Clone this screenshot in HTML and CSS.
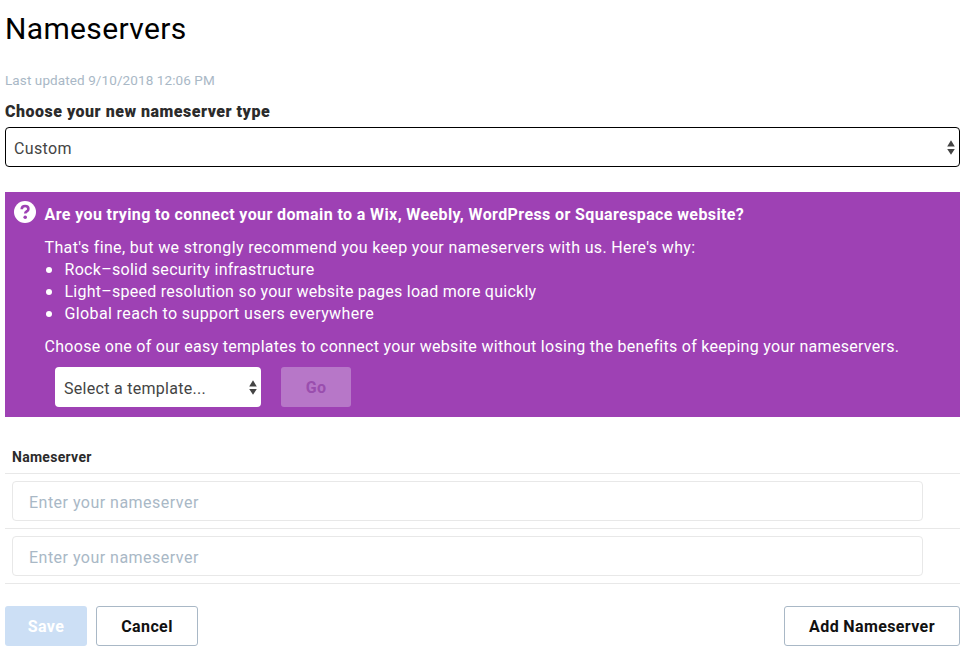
FILE: index.html
```
<!DOCTYPE html>
<html lang="en">
<head>
<meta charset="utf-8">
<title>Nameservers</title>
<link rel="stylesheet" href="styles.css">
</head>
<body>
<main class="page">
  <h1 class="title">Nameservers</h1>
  <p class="updated">Last updated 9/10/2018 12:06 PM</p>
  <div class="label">Choose your new nameserver type</div>
  <div class="select select-wide"><span>Custom</span><svg class="arrows" viewBox="0 0 8 15"><path d="M4 0.3 7.8 6.5H.2zM.2 9h7.6L4 14.7z"/></svg></div>

  <section class="notice">
    <svg class="help" viewBox="0 0 22 22"><circle cx="11" cy="11" r="11" fill="#fff"/><path d="M7.7 8.2C7.8 6 9.2 5 11.1 5s3.3 1.1 3.3 2.9c0 2.6-3.2 2.4-3.2 4.7" fill="none" stroke="#9e41b4" stroke-width="2.6"/><circle cx="11.2" cy="16.2" r="1.8" fill="#9e41b4"/></svg>
    <div class="notice-body">
      <h2 class="question">Are you trying to connect your domain to a Wix, Weebly, WordPress or Squarespace website?</h2>
      <p class="text intro">That's fine, but we strongly recommend you keep your nameservers with us. Here's why:</p>
      <ul class="reasons">
        <li>Rock–solid security infrastructure</li>
        <li class="speed">Light–speed resolution so your website pages load more quickly</li>
        <li class="reach">Global reach to support users everywhere</li>
      </ul>
      <p class="text">Choose one of our easy templates to connect your website without losing the benefits of keeping your nameservers.</p>
      <div class="template-row">
        <div class="select select-template"><span>Select a template...</span><svg class="arrows" viewBox="0 0 8 15"><path d="M4 0.3 7.8 6.5H.2zM.2 9h7.6L4 14.7z"/></svg></div>
        <button class="btn btn-go" disabled>Go</button>
      </div>
    </div>
  </section>

  <div class="table">
    <div class="table-head">Nameserver</div>
    <div class="table-row"><div class="field">Enter your nameserver</div></div>
    <div class="table-row"><div class="field">Enter your nameserver</div></div>
  </div>

  <div class="actions">
    <button class="btn btn-save" disabled>Save</button>
    <button class="btn btn-cancel">Cancel</button>
    <button class="btn btn-add">Add Nameserver</button>
  </div>
</main>
</body>
</html>
```
FILE: styles.css
```
* { box-sizing: border-box; }
body { margin: 0; background: #fff; color: #444; font: 16px/22px Roboto, "Liberation Sans", sans-serif; letter-spacing: .29px; }
h1, h2, p, ul { margin: 0; padding: 0; }
button { font-family: inherit; }
.page { width: 955px; margin-left: 5px; padding-top: 9px; }
.title { font-size: 30px; line-height: 40px; font-weight: 400; letter-spacing: .35px; color: #000; }
.updated { margin-top: 21px; font-size: 13.5px; line-height: 20px; letter-spacing: .1px; color: #a9b8c6; }
.label { margin-top: 12px; font-size: 16px; line-height: 20px; font-weight: 900; letter-spacing: .5px; color: #2b2b2b; }
.select { display: flex; align-items: center; justify-content: space-between; height: 40px; padding: 3px 4px 0 8px; border-radius: 4px; background: #fff; color: #444; }
.select-wide { margin-top: 5px; padding-right: 4px; border: 1px solid #000; letter-spacing: .35px; }
.arrows { width: 8px; height: 15px; margin-top: -3px; fill: #444; }
.notice { display: flex; margin-top: 25px; height: 225px; padding: 9px; background: #9e41b4; color: #fff; }
.help { width: 22px; height: 22px; }
.notice-body { margin-left: 8.5px; padding-top: 3px; white-space: nowrap; }
.question { font-size: 16px; line-height: 22px; font-weight: 700; letter-spacing: .39px; }
.text { margin-top: 11px; }
.intro { letter-spacing: .36px; }
.reasons { list-style: none; }
.reasons li { display: flex; align-items: center; }
.reasons li::before { content: ""; width: 6px; height: 6px; margin: 0 12.5px 1px 1.5px; border-radius: 50%; background: #fff; }
.speed { letter-spacing: .25px; }
.reach { letter-spacing: .38px; }
.template-row { display: flex; gap: 20px; margin: 9px 0 0 10.5px; }
.select-template { width: 206px; padding-left: 9px; }
.btn { height: 40px; padding: 0; border: 1px solid #a9b8c6; border-radius: 3px; background: #fff; color: #111; font-size: 16px; font-weight: 700; letter-spacing: .38px; }
.btn-go { width: 70px; border: 0; background: #b777c8; color: #9a4eae; }
.table { margin-top: 28px; }
.table-head { height: 29px; padding-left: 7px; border-bottom: 1px solid #e8e8e8; font-size: 14px; line-height: 24px; font-weight: 700; color: #2b2b2b; }
.table-row { height: 55px; padding: 7px; border-bottom: 1px solid #e8e8e8; }
.field { display: flex; align-items: center; width: 911px; height: 40px; padding: 3px 16px 0; border: 1px solid #e8e8e8; border-radius: 4px; color: #a9b8c6; letter-spacing: .48px; }
.actions { display: flex; margin-top: 22px; }
.btn-save { width: 82px; border: 0; background: #ccdff5; color: #fff; }
.btn-cancel { width: 102px; margin-left: 9px; }
.btn-add { width: 176px; margin-left: auto; }
```
